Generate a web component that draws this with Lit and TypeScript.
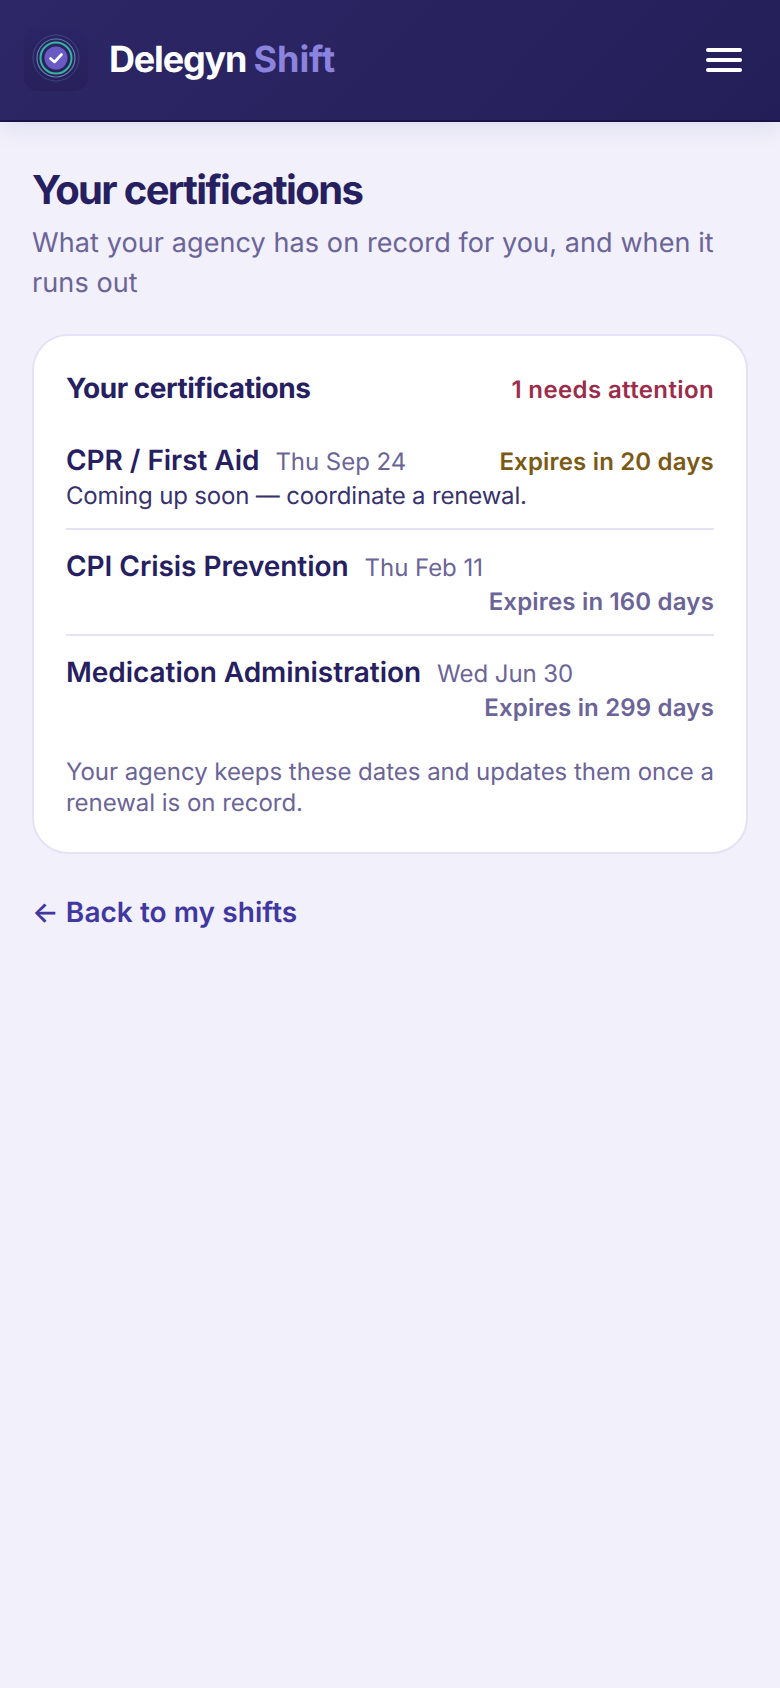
import { LitElement, html, css } from "lit";
import { customElement } from "lit/decorators.js";

@customElement("app-root")
export class AppRoot extends LitElement {
  static styles = css`
    :host { display: block; min-height: 1688px; background: #f1f0fb; font-family: Inter, "Liberation Sans", sans-serif; color: #262060; text-rendering: geometricPrecision; }
    .hdr { box-sizing: border-box; height: 122px; border-bottom: 2px solid #1a1446; background: linear-gradient(135deg, #2d2767, #241e58); box-shadow: 0 4px 24px rgba(36,30,92,.1); display: flex; align-items: center; padding: 0 38px 0 24px; gap: 21px; }
    .logo { width: 64px; height: 64px; display: block; margin-top: -2px; }
    .brand { font-size: 36px; font-weight: 700; letter-spacing: -1.18px; color: #fff; flex: 1; padding-bottom: 2px; }
    .brand span { color: #8b83dd; letter-spacing: -0.07px; }
    .burger { display: flex; flex-direction: column; gap: 6px; width: 36px; }
    .burger i { display: block; height: 4px; border-radius: 2px; background: #fff; }
    main { padding: 44px 32px 0; }
    h1 { margin: 0; font-size: 40px; line-height: 48px; font-weight: 700; letter-spacing: -1.65px; }
    .sub { margin: 9px 0 0; font-size: 27px; line-height: 40px; letter-spacing: 0.1px; color: #6b6497; }
    .card { margin-top: 31px; background: #fff; border: 2px solid #e4e2f4; border-radius: 36px; padding: 32px 32px 34px; }
    .top { display: flex; justify-content: space-between; align-items: baseline; padding-top: 3px; height: 35px; margin-bottom: 18px; }
    .top h2 { margin: 0; font-size: 28px; font-weight: 700; letter-spacing: -0.45px; }
    .attn { font-size: 24px; font-weight: 600; letter-spacing: 0.38px; color: #9b2c4a; }
    .row { display: flex; flex-wrap: wrap; justify-content: space-between; align-items: baseline; column-gap: 16px; padding: 19px 0 15px; border-bottom: 2px solid #e4e2f4; line-height: 34px; }
    .row:first-of-type { padding-top: 0; }
    .row:last-of-type { border-bottom: 0; }
    .left { display: flex; align-items: baseline; gap: 16px; }
    .name { font-size: 28px; font-weight: 600; letter-spacing: -0.05px; }
    .date { font-size: 24px; color: #6b6497; letter-spacing: -0.05px; }
    .exp { font-size: 24px; font-weight: 600; color: #6b6497; margin-left: auto; letter-spacing: 0.18px; }
    .exp.warn { color: #7a5a14; }
    .note { flex-basis: 100%; font-size: 24px; letter-spacing: -0.17px; color: #37326c; }
    .foot { margin: 16px 0 0; font-size: 24px; line-height: 31px; letter-spacing: -0.03px; color: #6b6497; }
    .back { display: block; margin-top: 39px; font-size: 28px; line-height: 38px; font-weight: 600; letter-spacing: 0.05px; color: #4038a0; text-decoration: none; }
  `;
  render() {
    return html`
      <header class="hdr">
        <svg class="logo" viewBox="0 0 64 64">
          <defs><linearGradient id="lg" x1="0" y1="0" x2="0" y2="1"><stop offset="0" stop-color="#2b2566"/><stop offset="1" stop-color="#272059"/></linearGradient></defs>
          <rect width="64" height="64" rx="14" fill="url(#lg)"/>
          <circle cx="32" cy="31" r="23" fill="none" stroke="#5a6ba0" stroke-width=".8" opacity=".6"/>
          <circle cx="32" cy="31" r="19" fill="none" stroke="#5f7fb0" stroke-width="1.2"/>
          <circle cx="32" cy="31" r="15.5" fill="none" stroke="#35b59c" stroke-width="2"/>
          <circle cx="32" cy="31" r="11.5" fill="#6a5bc4"/>
          <path d="M26.5 31.5l4 3.5 7-7.5" fill="none" stroke="#fff" stroke-width="2.6" stroke-linecap="round" stroke-linejoin="round"/>
        </svg>
        <div class="brand">Delegyn <span>Shift</span></div>
        <div class="burger"><i></i><i></i><i></i></div>
      </header>
      <main>
        <h1>Your certifications</h1>
        <p class="sub">What your agency has on record for you, and when it runs out</p>
        <section class="card">
          <div class="top"><h2>Your certifications</h2><span class="attn">1 needs attention</span></div>
          <div class="row"><span class="left"><span class="name">CPR / First Aid</span><span class="date">Thu Sep 24</span></span><span class="exp warn">Expires in 20 days</span><span class="note">Coming up soon — coordinate a renewal.</span></div>
          <div class="row"><span class="left"><span class="name">CPI Crisis Prevention</span><span class="date">Thu Feb 11</span></span><span class="exp">Expires in 160 days</span></div>
          <div class="row"><span class="left"><span class="name">Medication Administration</span><span class="date">Wed Jun 30</span></span><span class="exp">Expires in 299 days</span></div>
          <p class="foot">Your agency keeps these dates and updates them once a renewal is on record.</p>
        </section>
        <a class="back" href="#">← Back to my shifts</a>
      </main>
    `;
  }
}
